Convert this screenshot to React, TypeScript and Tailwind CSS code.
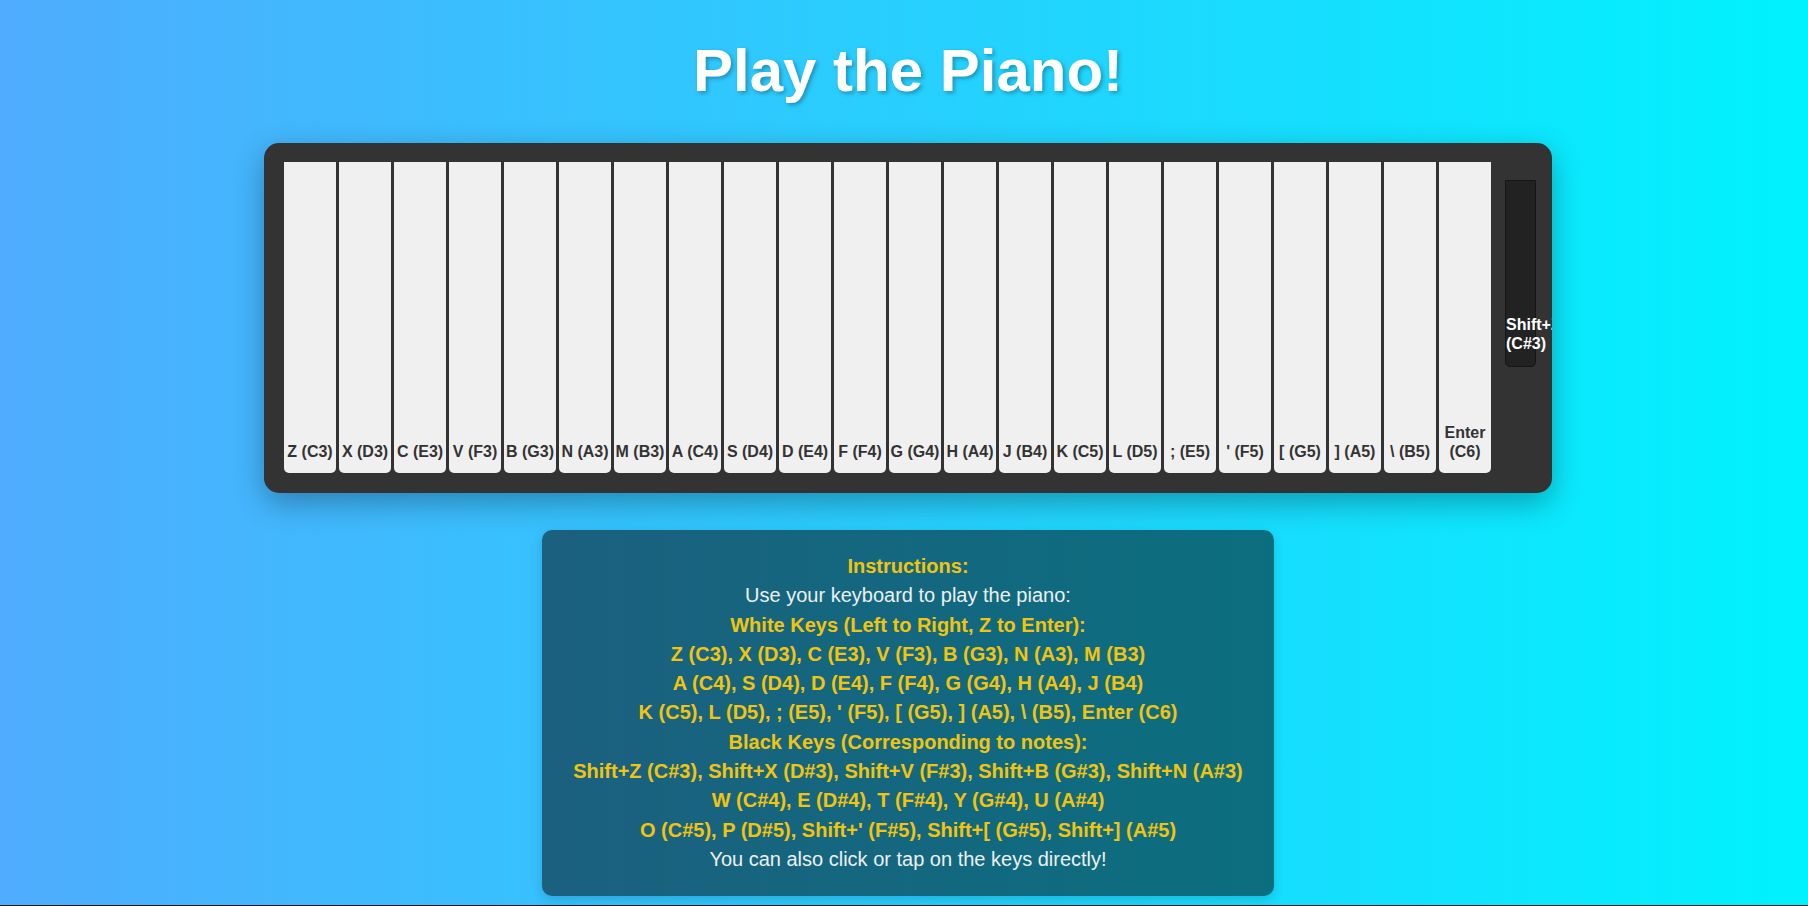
import React from "react";

const whiteKeys = [
  "Z (C3)", "X (D3)", "C (E3)", "V (F3)", "B (G3)", "N (A3)", "M (B3)",
  "A (C4)", "S (D4)", "D (E4)", "F (F4)", "G (G4)", "H (A4)", "J (B4)",
  "K (C5)", "L (D5)", "; (E5)", "' (F5)", "[ (G5)", "] (A5)", "\\ (B5)", "Enter (C6)",
];

const lines: { t: string; y: boolean }[] = [
  { t: "Instructions:", y: true },
  { t: "Use your keyboard to play the piano:", y: false },
  { t: "White Keys (Left to Right, Z to Enter):", y: true },
  { t: "Z (C3), X (D3), C (E3), V (F3), B (G3), N (A3), M (B3)", y: true },
  { t: "A (C4), S (D4), D (E4), F (F4), G (G4), H (A4), J (B4)", y: true },
  { t: "K (C5), L (D5), ; (E5), ' (F5), [ (G5), ] (A5), \\ (B5), Enter (C6)", y: true },
  { t: "Black Keys (Corresponding to notes):", y: true },
  { t: "Shift+Z (C#3), Shift+X (D#3), Shift+V (F#3), Shift+B (G#3), Shift+N (A#3)", y: true },
  { t: "W (C#4), E (D#4), T (F#4), Y (G#4), U (A#4)", y: true },
  { t: "O (C#5), P (D#5), Shift+' (F#5), Shift+[ (G#5), Shift+] (A#5)", y: true },
  { t: "You can also click or tap on the keys directly!", y: false },
];

export default function App() {
  return (
    <div className="box-border h-[906px] overflow-hidden border-b border-[#111] bg-[linear-gradient(to_right,#4facfe_0%,#00f2fe_100%)] pl-[8px] font-['Liberation_Sans',Arial,sans-serif]">
      <div className="flex flex-col items-center">
        <h1 className="mt-[36px] text-[60px] font-bold leading-[69px] text-white [text-shadow:2px_2px_4px_rgba(0,0,0,0.3)]">
          Play the Piano!
        </h1>

        <div className="mt-[38px] box-border flex h-[350px] w-[1288px] items-start overflow-hidden rounded-[15px] bg-[#333] px-[20px] pt-[19px] pb-[20px] shadow-[0_10px_30px_rgba(0,0,0,0.3)]">
          <div className="flex gap-[3px]">
            {whiteKeys.map((k) => (
              <div
                key={k}
                className="box-border flex h-[311px] w-[52px] flex-col items-center justify-end rounded-b-[5px] bg-[#f0f0f0] pb-[12px] text-center text-[16px] font-bold leading-[18.4px] text-[#333]"
              >
                <span>{k}</span>
              </div>
            ))}
          </div>
          <div className="ml-[14px] mt-[18px] box-border flex h-[187px] w-[31px] shrink-0 flex-col justify-end rounded-b-[5px] border border-[#151515] bg-[#222] pb-[13px] text-[16px] font-bold leading-[18.4px] text-white">
            <span className="whitespace-nowrap">Shift+Z</span>
            <span className="whitespace-nowrap">(C#3)</span>
          </div>
        </div>

        <div className="mt-[37px] box-border w-[732px] rounded-[10px] bg-[rgba(0,0,0,0.5)] py-[22px] text-center text-[20px] leading-[29.3px] shadow-[0_4px_12px_rgba(0,0,0,0.15)]">
          {lines.map((l, i) => (
            <div
              key={i}
              className={l.y ? "font-bold text-[#f1c40f]" : "text-[#ecf0f1]"}
            >
              {l.t}
            </div>
          ))}
        </div>
      </div>
    </div>
  );
}
